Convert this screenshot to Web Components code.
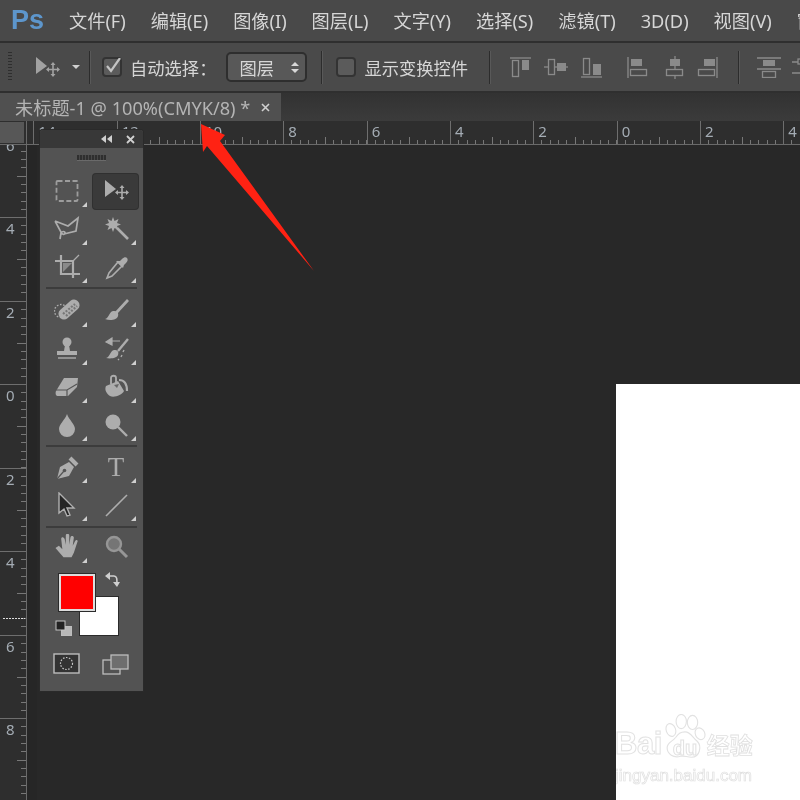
<!DOCTYPE html>
<html lang="zh">
<head>
<meta charset="utf-8">
<title>Photoshop</title>
<style>
  html, body { margin: 0; padding: 0; background: #282828; }
</style>
</head>
<body>
<ps-app>
  <ps-menubar>
    <ps-menu-item>文件(F)</ps-menu-item>
    <ps-menu-item>编辑(E)</ps-menu-item>
    <ps-menu-item>图像(I)</ps-menu-item>
    <ps-menu-item>图层(L)</ps-menu-item>
    <ps-menu-item>文字(Y)</ps-menu-item>
    <ps-menu-item>选择(S)</ps-menu-item>
    <ps-menu-item>滤镜(T)</ps-menu-item>
    <ps-menu-item>3D(D)</ps-menu-item>
    <ps-menu-item>视图(V)</ps-menu-item>
    <ps-menu-item>窗口(W)</ps-menu-item>
  </ps-menubar>
  <ps-options></ps-options>
  <ps-tabbar>未标题-1 @ 100%(CMYK/8) *</ps-tabbar>
  <ps-workspace>
    <ps-toolbox></ps-toolbox>
    <ps-arrow></ps-arrow>
  </ps-workspace>
</ps-app>

<script>
const MOVE_ICON = `
  <polygon points="4,2 4,19 15,11" fill="currentColor"/>
  <path d="M21 9v11M15.5 14.500h11" stroke="currentColor" stroke-width="1.600"/>
  <path d="M21 7l-2.500 3h5zM21 22l-2.500-3h5zM14 14.500l3-2.500v5zM28 14.500l-3-2.500v5z" fill="currentColor"/>`;

const ICONS = {
  marquee: `<rect x="2.500" y="3" width="21" height="20" rx="1" fill="none" stroke="#9c9c9c" stroke-width="1.800" stroke-dasharray="5 2.500"/>`,
  move: MOVE_ICON,
  lasso: `<path d="M1 5l13 5 10-8-2 13-12 3M1 5l6 11c1 3 4 3 4 1s-3-2-4 0l-1 6" fill="none" stroke="currentColor" stroke-width="1.700"/>`,
  wand: `<path d="M10 1l1.500 4 4-2-1.500 4 4 1.500-4 1.500 1.500 4-4-2L10 16l-1.500-4-4 2 1.500-4-4-1.500L6 7 4.500 3l4 2z" fill="currentColor"/><path d="M14 12l11 11" stroke="currentColor" stroke-width="2.600"/>`,
  crop: `<path d="M7 1v19h19M1 7h18v17" fill="none" stroke="currentColor" stroke-width="2.200"/><path d="M9 18V9h9z" fill="#8a8a8a"/><path d="M19 7l6-6" stroke="currentColor" stroke-width="1.200"/>`,
  dropper: `<path d="M15 8l4 4-10 10-5 2 2-5z" fill="none" stroke="currentColor" stroke-width="1.600"/><path d="M13 7l7 7 1-3 2-2c2-2 2-4 1-5s-3-1-5 1l-2 2z" fill="currentColor"/>`,
  heal: `<circle cx="7" cy="13" r="6.500" fill="none" stroke="currentColor" stroke-width="1.400" stroke-dasharray="1.600 1.600"/><rect x="3" y="6" width="24" height="11" rx="5" transform="rotate(-42 15 11.500)" fill="currentColor"/><path d="M9 16l12-10M12 18l11-10" stroke="#777" stroke-width="2.200" stroke-dasharray="2 1.500"/>`,
  brush: `<path d="M25 2L13 15" stroke="currentColor" stroke-width="2.800"/><path d="M10 13c4 0 6 2 5 5-1 4-8 5-13 3 4-1 4-7 8-8z" fill="currentColor"/>`,
  stamp: `<circle cx="13" cy="6" r="4.500" fill="currentColor"/><path d="M11 9h4l1 6h-6z" fill="currentColor"/><path d="M3 15h20v4H3z" fill="currentColor"/><path d="M4 22h18" stroke="currentColor" stroke-width="1.400"/>`,
  history: `<path d="M25 3L15 15" stroke="currentColor" stroke-width="2.400"/><path d="M11 14c4 0 5 2 4 5-1 3-7 4-12 3 4-1 4-7 8-8z" fill="currentColor"/><path d="M17 5H8M9 2L3 6l6 3z" fill="currentColor" stroke="currentColor" stroke-width="1.200"/><path d="M21 14l-1 2M19 19l-1 2M16 23l-1 1" stroke="currentColor" stroke-width="1.400"/>`,
  eraser: `<path d="M10 4h14l-1 9-9 9H4c-2 0-3-2-2-5z" fill="currentColor"/><path d="M2 16h11l10-6M13 16v6" fill="none" stroke="#555" stroke-width="1.200"/>`,
  bucket: `<path d="M3 12l12-5 6 10c-2 4-10 7-14 5-3-2-6-6-4-10z" fill="currentColor"/><path d="M8 10V4c0-3 5-3 5 0v5" fill="none" stroke="currentColor" stroke-width="1.800"/><path d="M11 11l3 3 2-4z" fill="#666"/><path d="M16 6c5 0 8 4 8 11" fill="none" stroke="currentColor" stroke-width="2.200"/>`,
  drop: `<path d="M13 2c2 6 8 10 8 15a8 8 0 0 1-16 0C5 12 11 8 13 2z" fill="currentColor"/>`,
  smudge: `<circle cx="10" cy="10" r="7.500" fill="currentColor"/><path d="M15 15l9 9" stroke="currentColor" stroke-width="2.400"/>`,
  pen: `<path d="M3 25l3-12 9-5 5 5-5 9z" fill="currentColor"/><path d="M3 25l7-8" stroke="#555" stroke-width="1.200"/><circle cx="10.500" cy="16.500" r="1.800" fill="#555"/><path d="M16 4l7 7" stroke="currentColor" stroke-width="4"/>`,
  path: `<path d="M5 1v20l5-4 3 7 3-1-3-7h7z" fill="#262626" stroke="#b0b0b0" stroke-width="1.400"/>`,
  line: `<path d="M3 24L24 3" stroke="currentColor" stroke-width="1.600"/>`,
  hand: `<g transform="translate(-2 -2) scale(1.150)"><path d="M3 14l3-2 3 3-1-9c0-2 2-2 3 0l1 5V3c0-2 3-2 3 0v8l1-6c0-2 3-2 3 0l-1 7 2-4c1-2 3-1 2 1l-3 9-2 4H10z" fill="currentColor"/></g>`,
  zoom: `<circle cx="11" cy="10" r="7" fill="#757575" stroke="#969696" stroke-width="2.400"/><path d="M16 15l8 8" stroke="#969696" stroke-width="3"/>`
};

// glyph of the Type tool stays a real text node
ICONS.type = `<text x="13" y="22" text-anchor="middle" font-family="Liberation Serif, serif" font-size="27" fill="currentColor">T</text>`;

const ALIGN_ICONS = {
  top: `<path d="M0 1h21" /><rect x="2.500" y="3.500" width="6" height="16" fill="none"/><rect x="12" y="3" width="7" height="10" fill="#8a8a8a" stroke="none"/>`,
  vmid: `<path d="M0 11h24" /><rect x="4.500" y="3.500" width="6" height="15" fill="#4a4a4a"/><rect x="13" y="7" width="9" height="8" fill="#8a8a8a" stroke="none"/>`,
  bottom: `<path d="M0 20h21" /><rect x="2.500" y="1.500" width="6" height="16" fill="none"/><rect x="12" y="7" width="8" height="11" fill="#8a8a8a" stroke="none"/>`,
  left: `<path d="M1 0v21" /><rect x="4" y="2" width="11" height="7" fill="#8a8a8a" stroke="none"/><rect x="3.500" y="12.500" width="16" height="6" fill="none"/>`,
  hmid: `<path d="M10 0v23" /><rect x="5" y="3" width="10" height="7" fill="#8a8a8a" stroke="none"/><rect x="1.500" y="13.500" width="16" height="6" fill="#4a4a4a"/>`,
  right: `<path d="M20 0v21" /><rect x="7" y="2" width="11" height="7" fill="#8a8a8a" stroke="none"/><rect x="1.500" y="12.500" width="16" height="6" fill="none"/>`,
  spaceTop: `<path d="M0 1h24M0 12h24" /><rect x="6" y="3" width="12" height="6" fill="#8a8a8a" stroke="none"/><rect x="5.500" y="14.500" width="13" height="6" fill="none"/>`,
  spaceMid: `<path d="M0 5h24M0 16h24" /><rect x="6" y="2" width="12" height="5" fill="#4a4a4a"/>`
};

class PsApp extends HTMLElement {
  constructor() {
    super();
    this.attachShadow({ mode: 'open' }).innerHTML = `
      <style>
        :host {
          display: flex;
          flex-direction: column;
          width: 800px;
          height: 800px;
          overflow: hidden;
          font-family: "Noto Sans", "Noto Sans CJK SC", sans-serif;
          filter: blur(0.35px);
        }
      </style>
      <slot></slot>`;
  }
}

class PsMenubar extends HTMLElement {
  constructor() {
    super();
    this.attachShadow({ mode: 'open' }).innerHTML = `
      <style>
        :host {
          display: flex;
          align-items: center;
          height: 41px;
          flex: none;
          padding-left: 11px;
          background: #494949;
          border-bottom: 2px solid #2f2f2f;
          white-space: nowrap;
          overflow: hidden;
        }
        .logo {
          width: 58px;
          flex: none;
          color: #5d96cc;
          font: bold 27px/1 "Liberation Sans", sans-serif;
        }
        .items {
          display: flex;
          gap: 25px;
        }
      </style>
      <div class="logo">Ps</div>
      <div class="items"><slot></slot></div>`;
  }
}

class PsMenuItem extends HTMLElement {
  constructor() {
    super();
    this.attachShadow({ mode: 'open' }).innerHTML = `
      <style>
        :host {
          display: block;
          flex: none;
          color: #d6d6d6;
          font-size: 18.200px;
          line-height: 24px;
        }
      </style>
      <slot></slot>`;
  }
}

class PsOptions extends HTMLElement {
  constructor() {
    super();
    const align = (name, w, h, ml) => `
      <svg style="margin-left:${ml}px" width="${w}" height="${h}" viewBox="0 0 ${w} ${h}"
        fill="none" stroke="#8a8a8a" stroke-width="1.300">${ALIGN_ICONS[name]}</svg>`;
    this.attachShadow({ mode: 'open' }).innerHTML = `
      <style>
        :host {
          display: flex;
          align-items: center;
          flex: none;
          height: 48px;
          padding-left: 8px;
          background: #4a4a4a;
          border-bottom: 2px solid #2f2f2f;
          color: #d6d6d6;
          font-size: 17.300px;
          white-space: nowrap;
          overflow: hidden;
        }
        .grip {
          width: 4px;
          height: 30px;
          flex: none;
          background: repeating-linear-gradient(#2e2e2e 0 1px, transparent 1px 3px);
        }
        .sep {
          width: 1px;
          height: 33px;
          flex: none;
          background: #2c2c2c;
          border-right: 1px solid #595959;
        }
        .move { color: #a2a2a2; margin-left: 20px; }
        .caret {
          width: 0;
          height: 0;
          flex: none;
          margin: 0 9px 0 12px;
          border: 4px solid transparent;
          border-top: 4px solid #d0d0d0;
          border-bottom: 0;
        }
        .check {
          width: 20px;
          height: 20px;
          flex: none;
          box-sizing: border-box;
          background: #5b5b5b;
          border: 2px solid #333;
          border-radius: 4px;
        }
        .check svg { display: block; margin: -1px 0 0 0; }
        span { flex: none; }
        .select {
          display: flex;
          align-items: center;
          justify-content: space-between;
          box-sizing: border-box;
          flex: none;
          width: 81px;
          height: 30px;
          padding: 0 6px 0 11px;
          background: #585858;
          border: 2px solid #2e2e2e;
          border-radius: 5px;
        }
        .updown {
          display: flex;
          flex-direction: column;
          gap: 3px;
        }
        .updown i {
          width: 0;
          height: 0;
          border: 4px solid transparent;
        }
        .updown i:first-child { border-top: 0; border-bottom: 4px solid #d8d8d8; }
        .updown i:last-child { border-bottom: 0; border-top: 4px solid #d8d8d8; }
        svg { flex: none; }
      </style>
      <div class="grip"></div>
      <svg class="move" width="28" height="24" viewBox="0 0 28 24">${MOVE_ICON}</svg>
      <div class="caret"></div>
      <div class="sep"></div>
      <div class="check" style="margin-left:11px">
        <svg width="18" height="17" viewBox="0 0 18 17">
          <path d="M3 8l4 5 9-13" fill="none" stroke="#c4c4c4" stroke-width="2.200"/>
        </svg>
      </div>
      <span style="margin-left:8px">自动选择：</span>
      <div class="select" style="margin-left:10px"><span>图层</span><div class="updown"><i></i><i></i></div></div>
      <div class="sep" style="margin-left:14px"></div>
      <div class="check" style="margin-left:13px"></div>
      <span style="margin-left:8px">显示变换控件</span>
      <div class="sep" style="margin-left:21px"></div>
      ${align('top', 21, 21, 19)}
      ${align('vmid', 24, 22, 13)}
      ${align('bottom', 21, 21, 13)}
      ${align('left', 21, 21, 25)}
      ${align('hmid', 20, 23, 17)}
      ${align('right', 21, 21, 12)}
      <div class="sep" style="margin-left:20px"></div>
      ${align('spaceTop', 24, 21, 17)}
      ${align('spaceMid', 24, 21, 11)}`;
  }
}

class PsTabbar extends HTMLElement {
  constructor() {
    super();
    this.attachShadow({ mode: 'open' }).innerHTML = `
      <style>
        :host {
          display: flex;
          flex: none;
          height: 28px;
          background: linear-gradient(#323232, #3b3b3b);
        }
        .tab {
          display: flex;
          align-items: center;
          box-sizing: border-box;
          width: 281px;
          padding-left: 15px;
          background: #505050;
          color: #b4b4b4;
          font-size: 18.200px;
          white-space: nowrap;
        }
        .close {
          margin-left: 11px;
          color: #d0d0d0;
        }
        svg { display: block; flex: none; }
      </style>
      <div class="tab">
        <span><slot></slot></span>
        <svg class="close" width="9" height="9" viewBox="0 0 9 9">
          <path d="M1 1l7 7M8 1l-7 7" stroke="currentColor" stroke-width="1.600"/>
        </svg>
      </div>`;
  }
}

class PsRuler extends HTMLElement {
  constructor() {
    super();
    const vertical = this.hasAttribute('vertical');
    const labels = (this.getAttribute('labels') || '').split(',');
    this.attachShadow({ mode: 'open' }).innerHTML = `
      <style>
        :host {
          display: flex;
          flex-direction: ${vertical ? 'column' : 'row'};
          overflow: hidden;
          box-sizing: border-box;
          background: #2e2e2e;
          color: #a4acb4;
          font: 15px/1 "Noto Sans", sans-serif;
          ${vertical ? 'border-right: 1px solid #6a6a6a;' : 'border-bottom: 1px solid #6a6a6a;'}
        }
        .cell {
          flex: none;
          box-sizing: border-box;
          background-repeat: no-repeat;
        }
        :host(:not([vertical])) .cell {
          width: 83.330px;
          height: 100%;
          padding: 3px 0 0 4px;
          border-left: 1px solid #6e6e6e;
          background-image:
            linear-gradient(#777, #777),
            repeating-linear-gradient(90deg, transparent 0 7.330px, #777 7.330px 8.330px);
          background-size: 1px 7px, 100% 4px;
          background-position: 41px bottom, left bottom;
        }
        :host([vertical]) .cell {
          height: 83.500px;
          width: 100%;
          padding: 3px 0 0 6px;
          border-top: 1px solid #6e6e6e;
          background-image:
            linear-gradient(#777, #777),
            repeating-linear-gradient(transparent 0 7.350px, #777 7.350px 8.350px);
          background-size: 9px 1px, 5px 100%;
          background-position: right 41px, right top;
        }
        .marker {
          position: absolute;
          left: 3px;
          top: 568px;
          width: 22px;
          height: 1px;
          background: repeating-linear-gradient(90deg, #ddd 0 2px, transparent 2px 3px);
        }
        :host([vertical]) { position: relative; }
      </style>
      ${labels.map(l => `<div class="cell">${l}</div>`).join('')}
      ${vertical ? '<div class="marker"></div>' : ''}`;
  }
}

class PsWorkspace extends HTMLElement {
  constructor() {
    super();
    this.attachShadow({ mode: 'open' }).innerHTML = `
      <style>
        :host {
          display: grid;
          grid-template-columns: 27px 773px;
          grid-template-rows: 24px 655px;
          position: relative;
          flex: none;
          background: #282828;
        }
        .corner {
          background: #2e2e2e;
          padding: 1px 2px 1px 0;
          box-sizing: border-box;
          border-bottom: 1px solid #6a6a6a;
          border-right: 1px solid #6a6a6a;
        }
        .corner div { height: 100%; background: #575757; }
        .h-wrap { overflow: hidden; display: flex; }
        .h-wrap ps-ruler { margin-left: -77px; width: 900px; }
        .v-wrap { overflow: hidden; display: flex; }
        .v-wrap ps-ruler { margin-top: -95px; width: 27px; height: 900px; }
        .canvas {
          overflow: hidden;
          padding: 239px 0 0 589px;
          background: linear-gradient(90deg, #262626 0 10px, #282828 10px);
        }
      </style>
      <div class="corner"><div></div></div>
      <div class="h-wrap"><ps-ruler labels="16,14,12,10,8,6,4,2,0,2,4,6"></ps-ruler></div>
      <div class="v-wrap"><ps-ruler vertical labels="8,6,4,2,0,2,4,6,8,10"></ps-ruler></div>
      <div class="canvas"><ps-document></ps-document></div>
      <slot></slot>`;
  }
}

class PsDocument extends HTMLElement {
  constructor() {
    super();
    this.attachShadow({ mode: 'open' }).innerHTML = `
      <style>
        :host {
          display: block;
          position: relative;
          width: 184px;
          height: 416px;
          background: #fff;
          overflow: hidden;
        }
        .mark {
          position: absolute;
          left: -1px;
          top: 330px;
          display: flex;
          flex-direction: column;
          color: #fff;
          -webkit-text-stroke: 1px #e2e2e2;
          white-space: nowrap;
        }
        .top {
          display: flex;
          align-items: flex-end;
          height: 47px;
        }
        .bai { font: bold 31px/34px "Liberation Sans", sans-serif; letter-spacing: -0.500px; }
        .paw {
          position: relative;
          width: 44px;
          height: 47px;
          flex: none;
          margin-left: 1px;
        }
        .paw svg { position: absolute; left: 0; top: 0; }
        .paw span {
          position: absolute;
          left: 10px;
          top: 24px;
          font: bold 20px/20px "Liberation Sans", sans-serif;
        }
        .jy {
          font: bold 23px/34px "Noto Sans CJK SC", sans-serif;
          -webkit-text-stroke: 0.8px #e0e0e0;
        }
        .url {
          margin-top: 6px;
          font: 17px/18px "Liberation Sans", sans-serif;
          -webkit-text-stroke: 0.7px #e0e0e0;
        }
      </style>
      <div class="mark">
        <div class="top">
          <span class="bai">Bai</span>
          <div class="paw">
            <svg width="44" height="47" viewBox="0 0 44 50" fill="#fff" stroke="#e2e2e2" stroke-width="1.200">
              <ellipse cx="7" cy="17" rx="5" ry="7" transform="rotate(-20 7 17)"/>
              <ellipse cx="18" cy="8" rx="5.500" ry="7.500"/>
              <ellipse cx="30" cy="9" rx="5.500" ry="7.500"/>
              <ellipse cx="38" cy="21" rx="5" ry="6.500" transform="rotate(-25 38 21)"/>
              <path d="M22 19c6 0 8 6 13 10 5 5 3 17-6 17-5 0-8-2-12-1-7 2-14-2-14-9 0-6 5-6 9-11 3-4 5-6 10-6z"/>
            </svg>
            <span>du</span>
          </div>
          <span class="jy">经验</span>
        </div>
        <div class="url">jingyan.baidu.com</div>
      </div>`;
  }
}

class PsTool extends HTMLElement {
  constructor() {
    super();
    const name = this.getAttribute('icon');
    const wide = name === 'move';
    this.attachShadow({ mode: 'open' }).innerHTML = `
      <style>
        :host {
          display: flex;
          align-items: center;
          justify-content: center;
          position: relative;
          height: 38px;
          color: #adadad;
        }
        :host([selected]) .face {
          background: #3a3a3a;
          box-shadow: 0 0 0 1px #303030;
          border-radius: 3px;
        }
        .face {
          display: flex;
          align-items: center;
          justify-content: center;
          width: 45px;
          height: 35px;
        }
        :host([corner])::after {
          content: "";
          position: absolute;
          right: 4px;
          bottom: 3px;
          border-left: 5px solid transparent;
          border-bottom: 5px solid #cfcfcf;
        }
      </style>
      <div class="face">
        <svg width="${wide ? 30 : 26}" height="26" viewBox="0 0 ${wide ? 30 : 26} 26">${ICONS[name]}</svg>
      </div>`;
  }
}

class PsToolbox extends HTMLElement {
  constructor() {
    super();
    const row = (a, b) => `
      <ps-tool icon="${a[0]}" ${a[1] || ''}></ps-tool>
      <ps-tool icon="${b[0]}" ${b[1] || ''}></ps-tool>`;
    this.attachShadow({ mode: 'open' }).innerHTML = `
      <style>
        :host {
          display: block;
          position: absolute;
          left: 40px;
          top: 9px;
          width: 103px;
          height: 561px;
          background: #535353;
          box-shadow: 0 0 0 1px #2a2a2a;
          border-radius: 3px 3px 0 0;
        }
        .head {
          display: flex;
          align-items: center;
          justify-content: flex-end;
          gap: 14px;
          height: 18px;
          padding-right: 8px;
          background: #383838;
          border-radius: 3px 3px 0 0;
          color: #d0d0d0;
        }
        .head svg { display: block; }
        .grip {
          height: 24px;
          display: flex;
          justify-content: center;
          align-items: center;
        }
        .grip div {
          width: 29px;
          height: 5px;
          margin-top: -4px;
          background: repeating-linear-gradient(90deg, #2f2f2f 0 2px, #484848 2px 3px);
          border-bottom: 1px solid #6a6a6a;
        }
        .group {
          display: grid;
          grid-template-columns: 49px 49px;
          padding-left: 2px;
        }
        .sep {
          height: 2px;
          margin: 1px 6px;
          background: #3c3c3c;
        }
        .colors {
          position: relative;
          height: 86px;
        }
        .swatch {
          position: absolute;
          box-sizing: border-box;
        }
        .fg {
          left: 19px;
          top: 8px;
          width: 36px;
          height: 37px;
          background: #f00;
          border: 2px solid #ddd;
          outline: 1px solid #2b2b2b;
          z-index: 1;
        }
        .bg {
          left: 40px;
          top: 31px;
          width: 38px;
          height: 38px;
          background: #fff;
          outline: 1px solid #2b2b2b;
        }
        .swap { position: absolute; left: 64px; top: 4px; color: #cfcfcf; }
        .dflt { position: absolute; left: 15px; top: 54px; }
        .modes {
          display: grid;
          grid-template-columns: 49px 49px;
          padding-left: 2px;
          height: 39px;
          position: relative;
        }
        .modes svg { justify-self: center; margin-top: 1px; }
      </style>
      <div class="head">
        <svg width="11" height="8" viewBox="0 0 11 8" fill="currentColor"><path d="M5 0v8L0 4zM11 0v8L6 4z"/></svg>
        <svg width="9" height="9" viewBox="0 0 9 9"><path d="M1 1l7 7M8 1l-7 7" stroke="currentColor" stroke-width="1.800"/></svg>
      </div>
      <div class="grip"><div></div></div>
      <div class="group">
        ${row(['marquee', 'corner'], ['move', 'selected'])}
        ${row(['lasso', 'corner'], ['wand', 'corner'])}
        ${row(['crop', 'corner'], ['dropper', 'corner'])}
      </div>
      <div class="sep" style="margin-bottom:3px"></div>
      <div class="group">
        ${row(['heal', 'corner'], ['brush', 'corner'])}
        ${row(['stamp', 'corner'], ['history', 'corner'])}
        ${row(['eraser', 'corner'], ['bucket', 'corner'])}
        ${row(['drop', 'corner'], ['smudge', 'corner'])}
      </div>
      <div class="sep"></div>
      <div class="group">
        ${row(['pen', 'corner'], ['type', 'corner'])}
        ${row(['path', 'corner'], ['line', 'corner'])}
      </div>
      <div class="sep" style="margin:2px 6px 0"></div>
      <div class="group">
        ${row(['hand', 'corner'], ['zoom'])}
      </div>
      <div class="colors">
        <div class="swatch fg"></div>
        <div class="swatch bg"></div>
        <svg class="swap" width="16" height="18" viewBox="0 0 16 18" fill="none" stroke="currentColor" stroke-width="1.600">
          <path d="M5 6h5c3 0 3 3 3 8"/>
          <path d="M1 6l5-4v8z" fill="currentColor" stroke="none"/>
          <path d="M9 12l4 5 3-5z" fill="currentColor" stroke="none"/>
        </svg>
        <svg class="dflt" width="17" height="16" viewBox="0 0 17 16">
          <rect x="6.500" y="6.500" width="10" height="9" fill="#b8b8b8" stroke="#bdbdbd"/>
          <rect x="1" y="1" width="9" height="9" fill="#222" stroke="#c4c4c4"/>
        </svg>
      </div>
      <div class="modes">
        <svg width="27" height="21" viewBox="0 0 27 21">
          <rect x="1" y="1" width="25" height="19" fill="#333" stroke="#bdbdbd" stroke-width="1.400"/>
          <circle cx="13.500" cy="10.500" r="6" fill="none" stroke="#c8c8c8" stroke-width="1.200" stroke-dasharray="1.500 1.500"/>
        </svg>
        <svg width="27" height="23" viewBox="0 0 27 23" fill="none" stroke="#bdbdbd" stroke-width="1.300">
          <rect x="1" y="7" width="17" height="14"/>
          <rect x="9" y="2" width="17" height="14" fill="#6e6e6e"/>
        </svg>
      </div>`;
  }
}

class PsArrow extends HTMLElement {
  constructor() {
    super();
    this.attachShadow({ mode: 'open' }).innerHTML = `
      <style>
        :host {
          display: block;
          position: absolute;
          left: 195px;
          top: 0;
        }
        svg { display: block; }
      </style>
      <svg width="125" height="155" viewBox="195 121 125 155">
        <polygon points="201,124 225,135 220,141 314,271 207,146 203,152" fill="#ff2213"/>
      </svg>`;
  }
}

customElements.define('ps-app', PsApp);
customElements.define('ps-menubar', PsMenubar);
customElements.define('ps-menu-item', PsMenuItem);
customElements.define('ps-options', PsOptions);
customElements.define('ps-tabbar', PsTabbar);
customElements.define('ps-ruler', PsRuler);
customElements.define('ps-document', PsDocument);
customElements.define('ps-workspace', PsWorkspace);
customElements.define('ps-tool', PsTool);
customElements.define('ps-toolbox', PsToolbox);
customElements.define('ps-arrow', PsArrow);
</script>
</body>
</html>
